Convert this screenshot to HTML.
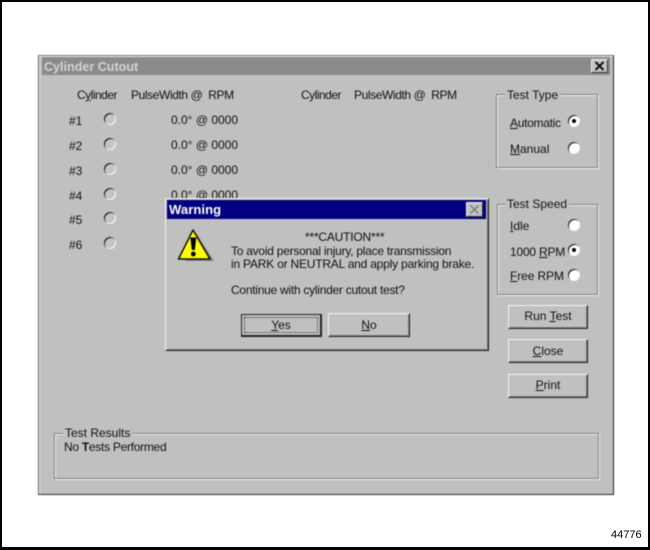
<!DOCTYPE html>
<html><head><meta charset="utf-8">
<style>
html,body{margin:0;padding:0;background:#fff}
#p{position:relative;width:650px;height:550px;overflow:hidden;background:#fff;font-family:"Liberation Sans",sans-serif;font-size:12px;color:#111}
#p div{position:absolute}
#w{left:0;top:0;width:650px;height:550px;filter:blur(.4px)}
.t{white-space:nowrap;line-height:14px;height:14px}
.r{width:12px;height:12px;border-radius:50%;background:#c4c4c4;box-shadow:inset 1px 1px 0 #222,inset -1px -1px 0 #f4f4f4}
.r.w{background:#fff}
.r.on::after{content:"";position:absolute;left:4px;top:4px;width:4px;height:4px;border-radius:50%;background:#000}
.g{border:1px solid #808080;box-shadow:1px 1px 0 #f0f0f0,inset 1px 1px 0 #f0f0f0;box-sizing:border-box}
.lb{background:#c0c0c0;padding:0 2px}
.b{background:#c0c0c0;box-sizing:border-box;border:1px solid;border-color:#f4f4f4 #222 #222 #f4f4f4;box-shadow:inset -1px -1px 0 #808080;text-align:center;line-height:21px}
u{text-decoration:underline}
.c{letter-spacing:-.5px}
.h{letter-spacing:-.4px}
</style></head><body>
<div id="p">
<!-- page border -->
<div style="left:0;top:0;width:650px;height:2px;background:#000"></div>
<div style="left:0;top:0;width:2px;height:550px;background:#000"></div>
<div style="left:648px;top:0;width:2px;height:550px;background:#000"></div>
<div style="left:0;top:547px;width:650px;height:3px;background:#000"></div>

<div id="w">
<!-- main window -->
<div style="left:38px;top:55px;width:576px;height:440px;background:#c0c0c0;box-sizing:border-box;border:1px solid;border-color:#777 #222 #333 #555;box-shadow:inset 1px 1px 0 #eee"></div>
<div style="left:42px;top:57px;width:568px;height:18px;background:#8a8a8a"></div>
<div class="t" style="left:44px;top:60px;color:#d4d4d4;font-weight:bold;font-size:12.5px;letter-spacing:.03px">Cylinder Cutout</div>
<div style="left:591px;top:59px;width:17px;height:14px;background:#c4c4c4;box-sizing:border-box;border:1px solid;border-color:#eee #333 #333 #eee"></div>
<svg style="position:absolute;left:594px;top:61px" width="11" height="10"><path d="M1.5 1L9.5 9M9.5 1L1.5 9" stroke="#111" stroke-width="2" fill="none"/></svg>

<!-- column heads -->
<div class="t c" style="left:77px;top:88px">C<u>y</u>linder</div>
<div class="t h" style="left:131px;top:88px">PulseWidth @&nbsp; RPM</div>
<div class="t c" style="left:301px;top:88px">Cylinder</div>
<div class="t h" style="left:354px;top:88px">PulseWidth @&nbsp; RPM</div>

<!-- rows -->
<div class="t" style="left:69px;top:114px">#1</div><div class="r" style="left:104px;top:113px"></div><div class="t" style="left:171px;top:113px">0.0° @ 0000</div>
<div class="t" style="left:69px;top:139px">#2</div><div class="r" style="left:104px;top:138px"></div><div class="t" style="left:171px;top:138px">0.0° @ 0000</div>
<div class="t" style="left:69px;top:164px">#3</div><div class="r" style="left:104px;top:163px"></div><div class="t" style="left:171px;top:163px">0.0° @ 0000</div>
<div class="t" style="left:69px;top:189px">#4</div><div class="r" style="left:104px;top:188px"></div><div class="t" style="left:171px;top:188px">0.0° @ 0000</div>
<div class="t" style="left:69px;top:213px">#5</div><div class="r" style="left:104px;top:212px"></div>
<div class="t" style="left:69px;top:238px">#6</div><div class="r" style="left:104px;top:237px"></div>

<!-- Test Type -->
<div class="g" style="left:496px;top:94px;width:102px;height:74px"></div>
<div class="t lb" style="left:505px;top:88px">Test Type</div>
<div class="t" style="left:510px;top:116px;letter-spacing:-.3px"><u>A</u>utomatic</div><div class="r w on" style="left:568px;top:115px"></div>
<div class="t" style="left:510px;top:142px"><u>M</u>anual</div><div class="r w" style="left:568px;top:142px"></div>

<!-- Test Speed -->
<div class="g" style="left:497px;top:204px;width:101px;height:91px"></div>
<div class="t lb" style="left:505px;top:197px">Test Speed</div>
<div class="t" style="left:510px;top:219px"><u>I</u>dle</div><div class="r w" style="left:568px;top:219px"></div>
<div class="t" style="left:510px;top:245px;letter-spacing:-.2px">1000 <u>R</u>PM</div><div class="r w on" style="left:568px;top:244px"></div>
<div class="t" style="left:510px;top:269px;letter-spacing:-.1px"><u>F</u>ree RPM</div><div class="r w" style="left:568px;top:269px"></div>

<!-- Buttons -->
<div class="b" style="left:508px;top:305px;width:80px;height:24px">Run <u>T</u>est</div>
<div class="b" style="left:508px;top:339px;width:80px;height:24px;line-height:22px"><u>C</u>lose</div>
<div class="b" style="left:508px;top:374px;width:80px;height:24px"><u>P</u>rint</div>

<!-- Results -->
<div class="g" style="left:54px;top:433px;width:545px;height:46px"></div>
<div class="t lb" style="left:63px;top:426px">Test Results</div>
<div class="t" style="left:64px;top:440px;letter-spacing:-.28px">No <b>T</b>ests Performed</div>

<!-- Warning dialog -->
<div style="left:165px;top:198px;width:324px;height:153px;background:#c0c0c0;box-sizing:border-box;border:1px solid;border-color:#eee #222 #222 #eee;box-shadow:inset 1px 1px 0 #c0c0c0,inset -1px -1px 0 #777"></div>
<div style="left:167px;top:200px;width:319px;height:19px;background:#000080"></div>
<div class="t" style="left:169px;top:203px;color:#fff;font-weight:bold;font-size:13px;letter-spacing:.1px">Warning</div>
<div style="left:466px;top:202px;width:17px;height:15px;background:#c4c4c4;box-sizing:border-box;border:1px solid;border-color:#eee #333 #333 #eee"></div>
<svg style="position:absolute;left:469px;top:204px" width="11" height="11"><path d="M1.5 1.5L9.5 9.5M9.5 1.5L1.5 9.5" stroke="#777" stroke-width="1.5" fill="none"/></svg>
<svg style="position:absolute;left:176px;top:226px" width="42" height="40">
<path d="M20 7L38 35H9Z" fill="#808080"/>
<path d="M17 4L34 33H2.500Z" fill="#ffff00" stroke="#111" stroke-width="1.5" stroke-linejoin="round"/>
<path d="M14.300 11.500H20.300L18.800 24H15.800Z" fill="#000"/><circle cx="17.300" cy="28" r="2.400" fill="#000"/>
</svg>
<div class="t" style="left:305px;top:230px;letter-spacing:-.2px">***CAUTION***</div>
<div class="t" style="left:231px;top:244px;letter-spacing:-.25px">To avoid personal injury, place transmission</div>
<div class="t" style="left:231px;top:257px;letter-spacing:-.21px">in PARK or NEUTRAL and apply parking brake.</div>
<div class="t" style="left:231px;top:283px;letter-spacing:-.26px">Continue with cylinder cutout test?</div>
<div class="b" style="left:241px;top:314px;width:81px;height:23px;border:1px solid #222;border-width:1px 2px 2px 1px;box-shadow:none;line-height:21px"><u>Y</u>es</div>
<div style="left:244px;top:317px;width:74px;height:16px;border:1px dotted #333;box-sizing:border-box"></div>
<div class="b" style="left:328px;top:313px;width:82px;height:24px;line-height:23px"><u>N</u>o</div>
</div>

<div class="t" style="left:611px;top:528px;font-size:11px;color:#000">44776</div>
</div>
</body></html>
